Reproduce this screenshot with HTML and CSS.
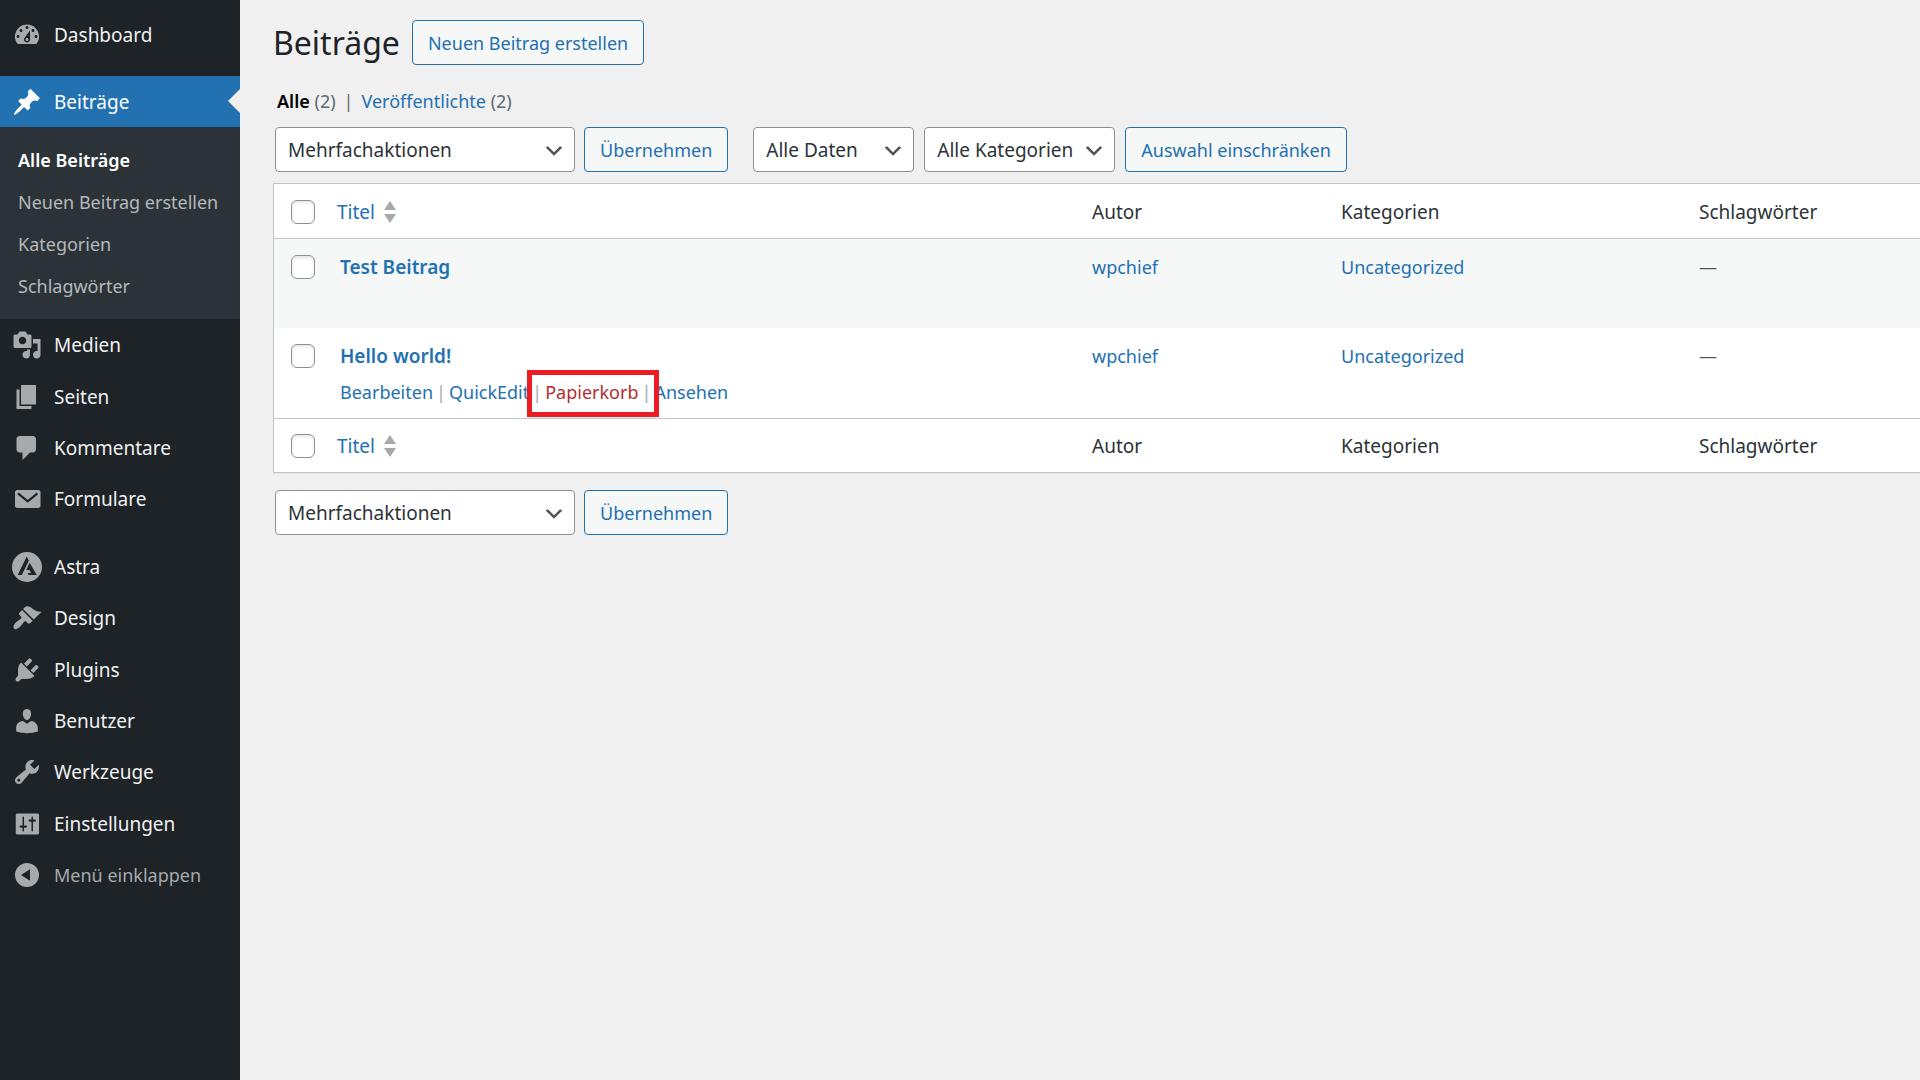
FILE: index.html
```html
<!DOCTYPE html>
<html lang="de">
<head>
<meta charset="utf-8">
<meta name="viewport" content="width=device-width, initial-scale=1">
<title>Beiträge</title>
<link rel="stylesheet" href="styles.css">
</head>
<body>
<div class="admin">
  <nav class="sidebar" aria-label="Hauptmenü">
    <ul class="menu">
      <li><a class="menu-link" href="#"><svg class="icon" viewBox="0 0 20 20"><path d="M3.76 16h12.48A8 8 0 0 0 10 3a8 8 0 0 0-6.24 13zM10 4c.55 0 1 .45 1 1s-.45 1-1 1-1-.45-1-1 .45-1 1-1zM6 6c.55 0 1 .45 1 1s-.45 1-1 1-1-.45-1-1 .45-1 1-1zm8 0c.55 0 1 .45 1 1s-.45 1-1 1-1-.45-1-1 .45-1 1-1zm-5.37 5.55L12 7v6c0 1.1-.9 2-2 2s-2-.9-2-2c0-.57.24-1.08.63-1.45zM4 10c.55 0 1 .45 1 1s-.45 1-1 1-1-.45-1-1 .45-1 1-1zm12 0c.55 0 1 .45 1 1s-.45 1-1 1-1-.45-1-1 .45-1 1-1zm-5 3c0-.55-.45-1-1-1s-1 .45-1 1 .45 1 1 1 1-.45 1-1z"/></svg>Dashboard</a></li>
      <li class="separator"></li>
      <li class="current"><a class="menu-link" href="#"><svg class="icon" viewBox="0 0 20 20"><path d="M10.44 3.02l1.82-1.82 6.36 6.35-1.83 1.82c-1.05-.68-2.48-.57-3.41.36l-.75.75c-.92.93-1.04 2.35-.35 3.41l-1.83 1.82-2.41-2.41-2.8 2.79c-.42.42-3.38 2.71-3.8 2.29s1.86-3.39 2.28-3.81l2.79-2.79L4.1 9.36l1.83-1.82c1.05.69 2.48.57 3.4-.36l.75-.75c.93-.92 1.05-2.35.36-3.41z"/></svg>Beiträge</a>
        <ul class="submenu">
          <li><a class="active" href="#">Alle Beiträge</a></li>
          <li><a href="#">Neuen Beitrag erstellen</a></li>
          <li><a href="#">Kategorien</a></li>
          <li><a href="#">Schlagwörter</a></li>
        </ul>
      </li>
      <li><a class="menu-link" href="#"><svg class="icon" viewBox="0 0 20 20"><path d="M13 11V4c0-.55-.45-1-1-1h-1.67L9 1H5L3.67 3H2c-.55 0-1 .45-1 1v7c0 .55.45 1 1 1h10c.55 0 1-.45 1-1zM7 4.5c1.38 0 2.5 1.12 2.5 2.5S8.38 9.5 7 9.5 4.5 8.38 4.5 7 5.62 4.5 7 4.5zM14 6h5v10.5c0 1.38-1.12 2.5-2.5 2.5S14 17.88 14 16.5s1.12-2.5 2.5-2.5c.17 0 .34.02.5.05V9h-3V6zm-4 8.05V13h2v3.5c0 1.38-1.12 2.5-2.5 2.5S7 17.88 7 16.5 8.12 14 9.5 14c.17 0 .34.02.5.05z"/></svg>Medien</a></li>
      <li><a class="menu-link" href="#"><svg class="icon" viewBox="0 0 20 20"><path d="M6 15V2h10v13H6zm-1 1h8v2H3V5h2v11z"/></svg>Seiten</a></li>
      <li><a class="menu-link" href="#"><svg class="icon" viewBox="0 0 20 20"><path d="M5 2h9c1.1 0 2 .9 2 2v7c0 1.1-.9 2-2 2h-2l-5 5v-5H5c-1.1 0-2-.9-2-2V4c0-1.1.9-2 2-2z"/></svg>Kommentare</a></li>
      <li><a class="menu-link" href="#"><svg class="icon" viewBox="0 0 20 20"><path d="M3.5 4h14c.8 0 1.5.7 1.5 1.300v9.400c0 .7-.7 1.300-1.500 1.300h-14c-.8 0-1.500-.6-1.500-1.300V5.300C2 4.700 2.700 4 3.500 4z"/><path class="cut" d="M4 6.200l6.500 5.300L17 6.200"/></svg>Formulare</a></li>
      <li class="separator"></li>
      <li><a class="menu-link" href="#"><svg class="icon" viewBox="0 0 30 30"><path fill-rule="evenodd" d="M15 0a15 15 0 1 1 0 30 15 15 0 0 1 0-30zM14.700 4.500L5.700 23h4.100l7-14.200zM17.700 10.800L14.200 18h3.300l1.600 3-3.500 0 1 2h8.100z"/></svg>Astra</a></li>
      <li><a class="menu-link" href="#"><svg class="icon" viewBox="0 0 20 20"><path d="M14.48 11.06L7.41 3.99l1.5-1.5c.5-.56 2.3-.47 3.51.32 1.21.8 1.43 1.28 2.91 2.1 1.18.64 2.45 1.26 4.45.85zm-.71.71L6.7 4.7 4.93 6.47c-.39.39-.39 1.02 0 1.41l1.06 1.06c.39.39.39 1.03 0 1.42-.6.6-1.43 1.11-2.21 1.69-.35.26-.7.53-1.01.84C1.43 14.23.4 16.08 1.4 17.07c.99 1 2.84-.03 4.18-1.36.31-.31.58-.66.85-1.02.57-.78 1.08-1.61 1.69-2.21.39-.39 1.02-.39 1.41 0l1.06 1.06c.39.39 1.02.39 1.41 0z"/></svg>Design</a></li>
      <li><a class="menu-link" href="#"><svg class="icon" viewBox="0 0 20 20"><path d="M13.11 4.36L9.87 7.6 8 5.73l3.24-3.24c.35-.34 1.05-.2 1.56.32.52.51.66 1.21.31 1.55zm-8 1.77l.91-1.12 9.01 9.01-1.19.84c-.71.71-2.63 1.16-3.82 1.16H6.14L4.9 17.26c-.59.59-1.54.59-2.12 0-.59-.58-.59-1.53 0-2.12l1.24-1.24v-3.88c0-1.13.4-3.19 1.09-3.89zm7.26 3.97l3.24-3.24c.34-.35 1.04-.21 1.55.31.52.51.66 1.21.31 1.55l-3.24 3.25z"/></svg>Plugins</a></li>
      <li><a class="menu-link" href="#"><svg class="icon" viewBox="0 0 20 20"><path d="M10 9.25c-2.27 0-2.73-3.44-2.73-3.44C7 4.02 7.82 2 9.97 2c2.16 0 2.98 2.02 2.71 3.81 0 0-.41 3.44-2.68 3.44zm0 2.57L12.72 10c2.39 0 4.52 2.33 4.52 4.53v2.49s-3.65 1.13-7.24 1.13c-3.65 0-7.24-1.13-7.24-1.13v-2.49c0-2.25 1.94-4.48 4.47-4.48z"/></svg>Benutzer</a></li>
      <li><a class="menu-link" href="#"><svg class="icon" viewBox="0 0 20 20"><path d="M16.68 9.77c-1.34 1.34-3.3 1.67-4.95.99l-5.41 6.52c-.99.99-2.59.99-3.58 0s-.99-2.59 0-3.57l6.52-5.42c-.68-1.65-.35-3.61.99-4.95 1.28-1.28 3.12-1.62 4.72-1.06l-2.89 2.89 2.82 2.82 2.86-2.87c.53 1.58.18 3.39-1.08 4.65zM3.81 16.21c.4.39 1.04.39 1.43 0 .4-.4.4-1.04 0-1.43-.39-.4-1.03-.4-1.43 0-.39.39-.39 1.03 0 1.43z"/></svg>Werkzeuge</a></li>
      <li><a class="menu-link" href="#"><svg class="icon" viewBox="0 0 20 20"><path d="M18 16V4c0-.55-.45-1-1-1H3.500c-.55 0-1 .45-1 1v12c0 .55.45 1 1 1H17c.55 0 1-.45 1-1zM8 11h1c.55 0 1 .3 1 .7s-.45.8-1 .8H8v2c0 .28-.22.5-.5.5s-.5-.22-.5-.5v-2H6c-.55 0-1-.4-1-.8s.45-.7 1-.7h1V5.500c0-.28.22-.5.5-.5s.5.22.5.5V11zm5-2.500h-1c-.55 0-1-.4-1-.8s.45-.7 1-.7h1V5.500c0-.28.22-.5.5-.5s.5.22.5.5V7h1c.55 0 1 .3 1 .7s-.45.8-1 .8h-1v6c0 .28-.22.5-.5.5s-.5-.22-.5-.5v-6z"/></svg>Einstellungen</a></li>
      <li><button class="menu-link collapse" type="button"><svg class="icon" viewBox="0 0 20 20"><path d="M10 2a8 8 0 1 1 0 16 8 8 0 0 1 0-16zm2 4.200L6 10l6 3.800z"/></svg>Menü einklappen</button></li>
    </ul>
  </nav>

  <main class="content">
    <header class="page-head">
      <h1>Beiträge</h1>
      <a class="button" href="#">Neuen Beitrag erstellen</a>
    </header>

    <ul class="views">
      <li><a class="active" href="#">Alle</a> (2)</li>
      <li>|</li>
      <li><a href="#">Veröffentlichte</a> (2)</li>
    </ul>

    <div class="tablenav">
      <div class="group">
        <select class="wide" aria-label="Mehrfachaktion wählen"><option>Mehrfachaktionen</option></select>
        <button class="button" type="button">Übernehmen</button>
      </div>
      <div class="group filters">
        <select class="dates" aria-label="Nach Datum filtern"><option>Alle Daten</option></select>
        <select class="cats" aria-label="Nach Kategorie filtern"><option>Alle Kategorien</option></select>
        <button class="button" type="button">Auswahl einschränken</button>
      </div>
    </div>

    <table class="posts">
      <colgroup><col class="c-check"><col><col class="c-author"><col class="c-cats"><col class="c-tags"></colgroup>
      <thead>
        <tr>
          <td><input type="checkbox" aria-label="Alle auswählen"></td>
          <th scope="col"><a class="sort" href="#">Titel<svg viewBox="0 0 12 22"><path d="M6 0l6 9H0zM0 13h12l-6 9z"/></svg></a></th>
          <th scope="col">Autor</th>
          <th scope="col">Kategorien</th>
          <th scope="col">Schlagwörter</th>
        </tr>
      </thead>
      <tbody>
        <tr>
          <td><input type="checkbox" aria-label="Test Beitrag auswählen"></td>
          <td class="title"><a class="row-title" href="#">Test Beitrag</a></td>
          <td><a href="#">wpchief</a></td>
          <td><a href="#">Uncategorized</a></td>
          <td>—</td>
        </tr>
        <tr>
          <td><input type="checkbox" aria-label="Hello world! auswählen"></td>
          <td class="title"><a class="row-title" href="#">Hello world!</a>
            <div class="row-actions"><a href="#">Bearbeiten</a><i>|</i><a href="#">QuickEdit</a><i>|</i><span class="marked"><a class="trash" href="#">Papierkorb</a></span><i>|</i><a href="#">Ansehen</a></div>
          </td>
          <td><a href="#">wpchief</a></td>
          <td><a href="#">Uncategorized</a></td>
          <td>—</td>
        </tr>
      </tbody>
      <tfoot>
        <tr>
          <td><input type="checkbox" aria-label="Alle auswählen"></td>
          <th scope="col"><a class="sort" href="#">Titel<svg viewBox="0 0 12 22"><path d="M6 0l6 9H0zM0 13h12l-6 9z"/></svg></a></th>
          <th scope="col">Autor</th>
          <th scope="col">Kategorien</th>
          <th scope="col">Schlagwörter</th>
        </tr>
      </tfoot>
    </table>

    <div class="tablenav bottom">
      <div class="group">
        <select class="wide" aria-label="Mehrfachaktion wählen"><option>Mehrfachaktionen</option></select>
        <button class="button" type="button">Übernehmen</button>
      </div>
    </div>
  </main>
</div>
</body>
</html>
```

FILE: styles.css
```css
* { box-sizing: border-box; }

body {
  margin: 0;
  background: #f0f0f1;
  color: #2c3338;
  font-family: "Noto Sans", "Open Sans", sans-serif;
  font-size: 18px;
  line-height: 28px;
}

ul { list-style: none; margin: 0; padding: 0; }
a { color: #2271b1; text-decoration: none; }
button, select, input { font: inherit; margin: 0; }

.admin {
  display: grid;
  grid-template-columns: 240px minmax(0, 1fr);
  min-height: 100vh;
}

/* Sidebar */
.sidebar { background: #1d2327; }
.menu { padding-top: 9px; }
.menu > li:nth-child(3n + 4) { padding-bottom: 1px; }
.separator { height: 16px; }

.menu-link {
  position: relative;
  display: flex;
  align-items: center;
  gap: 12px;
  width: 100%;
  height: 51px;
  padding: 0 12px;
  border: 0;
  background: none;
  color: #f0f0f1;
  font-size: 19px;
}
.icon { width: 30px; height: 30px; flex: none; fill: #a7aaad; }
.icon .cut { fill: none; stroke: #1d2327; stroke-width: 1.5; }
.menu-link.collapse { color: #a7aaad; font-size: 18px; cursor: pointer; }

.current > .menu-link { background: #2271b1; color: #fff; }
.current .icon { fill: #fff; }
.current > .menu-link::after {
  content: "";
  position: absolute;
  right: 0;
  top: 13px;
  border: 12px solid transparent;
  border-left: 0;
  border-right-color: #f0f0f1;
}

.submenu { padding: 12px 0; background: #2c3338; }
.submenu a {
  display: block;
  padding: 7px 18px;
  color: #b4b8bc;
}
.submenu a.active { color: #fff; font-weight: 600; }

/* Content */
.content { padding: 20px 0 0 33px; }
.page-head { display: flex; align-items: center; gap: 12px; }
h1 { margin: 0; color: #1d2327; font-size: 32px; font-weight: 400; line-height: 45px; }

.button {
  height: 45px;
  padding: 1px 15px 0;
  border: 1px solid #2271b1;
  border-radius: 4px;
  background: #f6f7f7;
  color: #2271b1;
  font-size: 18px;
  line-height: 42px;
  white-space: nowrap;
}

.views { display: flex; gap: 8px; margin: 22px 0 12px 4px; color: #646970; }
.views .active { color: #000; font-weight: 600; }

.tablenav { display: flex; gap: 25px; margin: 0 0 11px 2px; }
.tablenav.bottom { margin-top: 17px; }
.group { display: flex; gap: 9px; }
.group.filters { gap: 10px; }

select {
  height: 45px;
  padding: 0 32px 0 12px;
  border: 1px solid #8c8f94;
  border-radius: 4px;
  appearance: none;
  background: #fff url("data:image/svg+xml,%3Csvg xmlns='http://www.w3.org/2000/svg' viewBox='0 0 20 20'%3E%3Cpath d='M5 6l5 5 5-5 2 1-7 7-7-7 2-1z' fill='%23555'/%3E%3C/svg%3E") no-repeat right 8px top 11px / 24px 24px;
  color: #2c3338;
  font-size: 19px;
}
.wide { width: 300px; }
.dates { width: 161px; }
.cats { width: 191px; }

/* Posts table */
.posts {
  width: 100%;
  table-layout: fixed;
  border-collapse: separate;
  border-spacing: 0;
  border: 1px solid #c3c4c7;
  border-right: 0;
  background: #fff;
  box-shadow: 0 1px 1px rgba(0, 0, 0, .04);
}
.c-check { width: 48px; }
.c-author { width: 249px; }
.c-cats { width: 358px; }
.c-tags { width: 236px; }

th, .posts td { padding: 1px 15px 0; text-align: left; vertical-align: middle; font-weight: 400; }
.posts td:first-child { padding: 1px 0 0 17px; }
thead tr { height: 55px; }
tfoot tr { height: 54px; }
thead th, tfoot th { font-size: 19px; }
thead th, thead td { border-bottom: 1px solid #c3c4c7; }
tfoot th, tfoot td { border-top: 1px solid #c3c4c7; }

tbody tr { height: 90px; }
tbody tr:first-child { height: 89px; background: #f6f7f7; }
.posts tbody td { padding-top: 14px; vertical-align: top; color: #50575e; }
.posts tbody td:first-child { padding-top: 16px; }
.posts tbody .title { padding-left: 18px; }

input[type="checkbox"] {
  display: block;
  width: 24px;
  height: 24px;
  border: 1px solid #8c8f94;
  border-radius: 6px;
  appearance: none;
  background: #fff;
  box-shadow: inset 0 2px 3px rgba(0, 0, 0, .1);
}

.sort { display: inline-flex; align-items: center; gap: 9px; }
.sort svg { width: 12px; height: 22px; fill: #a7aaad; }

.row-title { display: block; font-size: 19px; font-weight: 600; }
.row-actions { display: flex; margin-top: 8px; white-space: nowrap; }
.row-actions i { padding: 0 3px; color: #a7aaad; font-style: normal; }
.trash { color: #b32d2e; }
.marked { position: relative; }
.marked::after {
  content: "";
  position: absolute;
  inset: -8px -21px -11px -18px;
  border: 5px solid #ed1c24;
}
```
